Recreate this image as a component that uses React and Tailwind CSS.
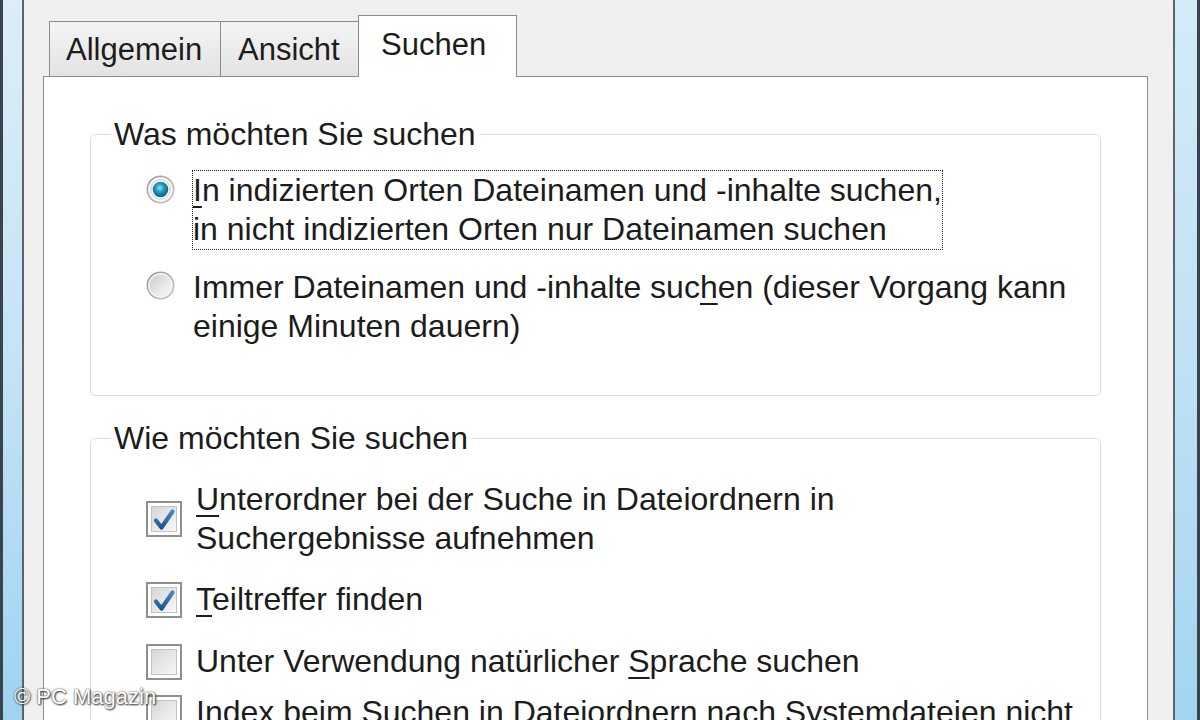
import React from "react";

function Radio({ checked, id }) {
  return (
    <svg width="29" height="29" viewBox="0 0 28 28" className="shrink-0">
      <defs>
        <linearGradient id={`ring-${id}`} x1="0" y1="0" x2="1" y2="1">
          <stop offset="0" stopColor="#999999" />
          <stop offset="1" stopColor="#c6c6c6" />
        </linearGradient>
        <linearGradient id={`in-${id}`} x1="0" y1="0" x2="1" y2="1">
          <stop offset="0" stopColor="#cdcdcd" />
          <stop offset="1" stopColor="#fbfbfb" />
        </linearGradient>
        <radialGradient id={`dot-${id}`} cx="0.45" cy="0.4" r="0.6">
          <stop offset="0" stopColor="#8fe3f5" />
          <stop offset="0.45" stopColor="#1f9cc0" />
          <stop offset="1" stopColor="#0c5d7c" />
        </radialGradient>
      </defs>
      <circle cx="14" cy="14" r="13.5" fill={`url(#ring-${id})`} />
      <circle cx="14" cy="14" r="12" fill="#f4f4f4" />
      {checked ? (
        <>
          <circle cx="14" cy="14" r="10" fill="#dcdcdc" />
          <circle cx="14" cy="14" r="8.5" fill="#ffffff" />
          <circle cx="14" cy="14" r="7.5" fill={`url(#dot-${id})`} />
        </>
      ) : (
        <circle cx="14" cy="14" r="10.5" fill={`url(#in-${id})`} />
      )}
    </svg>
  );
}

function Check({ checked }) {
  return (
    <div className="w-[36px] h-[36px] shrink-0 border-2 border-[#8e8f8f] bg-white p-[3px]">
      <div className="w-full h-full border border-[#c2c2c2] bg-linear-to-br from-[#d6d6d6] to-[#f8f8f8]">
        {checked && (
          <svg width="26" height="26" viewBox="0 0 26 26" className="block -mt-px -ml-px">
            <defs>
              <linearGradient id="chk" x1="0" y1="0" x2="0" y2="1">
                <stop offset="0" stopColor="#4a88c2" />
                <stop offset="1" stopColor="#1a5590" />
              </linearGradient>
            </defs>
            <path
              d="M5 14.5 L10.5 21.5 L21.5 5.5"
              fill="none"
              stroke="url(#chk)"
              strokeWidth="4.2"
              strokeLinecap="round"
              strokeLinejoin="round"
            />
          </svg>
        )}
      </div>
    </div>
  );
}

function U({ children }) {
  return (
    <span className="underline decoration-[2px] underline-offset-[5px]">{children}</span>
  );
}

export default function App() {
  return (
    <div className="w-[1200px] h-[720px] overflow-hidden flex relative bg-[#f0f0f0] text-[#1c1c1c] font-['Liberation_Sans',Arial,sans-serif]">
      {/* left window frame */}
      <div className="w-[3px] shrink-0 bg-[#38434d]" />
      <div className="w-[19px] shrink-0 bg-linear-to-b from-[#dcedf8] via-[#c4e3f5] to-[#9fd3f0]" />
      <div className="w-[2px] shrink-0 bg-[#5c636b]" />

      {/* dialog content */}
      <div className="flex-1 flex flex-col pt-[15px] pl-[19px] pr-[25px] min-w-0">
        {/* tabs */}
        <div className="flex items-end h-[61px] pl-[6px] text-[31px] leading-none">
          <div className="w-[172px] h-[55px] border border-[#898c95] border-b-0 bg-linear-to-b from-[#f4f4f4] to-[#e3e3e3] pl-[16px] pt-[12px]">
            Allgemein
          </div>
          <div className="-ml-px w-[139px] h-[55px] border border-[#898c95] border-b-0 bg-linear-to-b from-[#f4f4f4] to-[#e3e3e3] pl-[17px] pt-[12px]">
            Ansicht
          </div>
          <div className="-ml-px relative z-10 -mb-px w-[159px] h-[62px] border border-[#898c95] border-b-0 bg-white pl-[22px] pt-[13px]">
            Suchen
          </div>
        </div>

        {/* panel */}
        <div className="flex-1 border border-[#898c95] bg-white pt-[39px] px-[46px] text-[32px] leading-[39px]">
          <fieldset className="border border-[#d5dfe5] rounded-[5px] pl-[20px] pb-[48px]">
            <legend className="px-[3px] leading-[36px]">Was möchten Sie suchen</legend>
            <div className="flex items-start mt-[18px] ml-[35px]">
              <div className="mt-[5px] mr-[17px]">
                <Radio checked id="r1" />
              </div>
              <div className="border border-dotted border-[#222]">
                <div><U>I</U>n indizierten Orten Dateinamen und -inhalte suchen,</div>
                <div>in nicht indizierten Orten nur Dateinamen suchen</div>
              </div>
            </div>
            <div className="flex items-start mt-[17px] ml-[35px]">
              <div className="mt-[4px] mr-[17px]">
                <Radio id="r2" />
              </div>
              <div className="border border-transparent">
                <div>Immer Dateinamen und -inhalte suc<U>h</U>en (dieser Vorgang kann</div>
                <div>einige Minuten dauern)</div>
              </div>
            </div>
          </fieldset>

          <fieldset className="mt-[24px] border border-[#d5dfe5] rounded-[5px] pl-[20px] pb-[40px]">
            <legend className="px-[3px] leading-[36px]">Wie möchten Sie suchen</legend>
            <div className="flex items-center mt-[24px] ml-[35px] gap-[14px]">
              <Check checked />
              <div>
                <div><U>U</U>nterordner bei der Suche in Dateiordnern in</div>
                <div>Suchergebnisse aufnehmen</div>
              </div>
            </div>
            <div className="flex items-center mt-[22px] ml-[35px] gap-[14px]">
              <Check checked />
              <div><U>T</U>eiltreffer finden</div>
            </div>
            <div className="flex items-center mt-[23px] ml-[35px] gap-[14px]">
              <Check />
              <div>Unter Verwendung natürlicher <U>S</U>prache suchen</div>
            </div>
            <div className="flex items-center mt-[12px] ml-[35px] gap-[14px]">
              <Check />
              <div>Index beim Suchen in Dateiordnern nach Systemdateien nicht</div>
            </div>
          </fieldset>
        </div>
      </div>

      {/* right window frame */}
      <div className="w-[2px] shrink-0 bg-[#5c636b]" />
      <div className="w-[22px] shrink-0 bg-linear-to-b from-[#d4ebf8] via-[#bfe1f4] to-[#a3d5f1]" />
      <div className="w-[3px] shrink-0 bg-[#38434d]" />

      {/* watermark */}
      <div className="absolute left-[14px] top-[686px] text-[22px] leading-none text-white font-['Liberation_Sans',Arial,sans-serif] [text-shadow:0_0_2px_#333,1px_1px_2px_#333]">
        © PC Magazin
      </div>
    </div>
  );
}
